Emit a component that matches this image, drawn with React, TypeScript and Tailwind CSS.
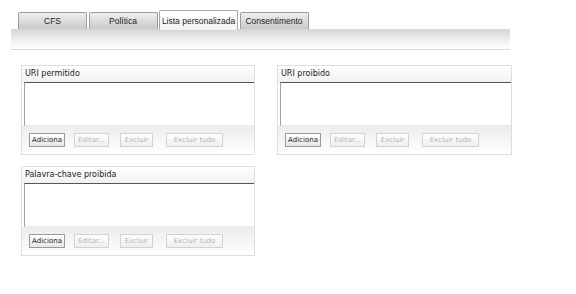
import React from "react";

const tabs = ["CFS", "Política", "Lista personalizada", "Consentimento"];

const ListBox = ({ title }: { title: string }) => (
  <div className="flex h-[90px] flex-col border border-[#dedede] bg-white">
    {/* header */}
    <div className="flex h-[16px] items-center bg-gradient-to-b from-white to-[#f1f1f1] pl-[3px] font-['DejaVu_Sans',sans-serif] text-[8px] text-[#222]">
      {title}
    </div>
    {/* list area */}
    <div className="ml-[2px] h-[44px] border-l border-t border-b border-l-[#a0a0a0] border-t-[#555] border-b-[#ececec] bg-white" />
    {/* buttons */}
    <div className="flex flex-1 items-center bg-gradient-to-b from-[#ececec] to-white pl-[7px] font-['DejaVu_Sans',sans-serif] text-[7px]">
      <button className="h-[14px] w-[36px] border border-[#9a9a9a] bg-gradient-to-b from-white to-[#e6e6e6] text-[#1c1c2e]">
        Adiciona
      </button>
      <button className="ml-[9px] h-[14px] w-[35px] border border-[#d2d2d2] bg-gradient-to-b from-white to-[#eeeeee] text-[#b4b4b4]">
        Editar...
      </button>
      <button className="ml-[11px] h-[14px] w-[33px] border border-[#d2d2d2] bg-gradient-to-b from-white to-[#eeeeee] text-[#b4b4b4]">
        Excluir
      </button>
      <button className="ml-[13px] h-[14px] w-[57px] border border-[#d2d2d2] bg-gradient-to-b from-white to-[#eeeeee] text-[#b4b4b4]">
        Excluir tudo
      </button>
    </div>
  </div>
);

export default function App() {
  return (
    <div className="h-[294px] w-[576px] bg-white pt-[10px]">
      {/* tab strip */}
      <div className="ml-[11px] w-[499px]">
        <div className="ml-[7px] flex items-end gap-[1.5px] font-['Liberation_Sans',Arial,sans-serif] text-[8.5px] text-[#222]">
          {tabs.map((t, i) =>
            i === 2 ? (
              <div
                key={t}
                className="-mb-px flex h-[20px] w-[79px] items-center justify-center rounded-t-[2px] border border-b-0 border-[#a8a8a8] bg-gradient-to-b from-white to-[#f3f3f3] pt-[1px]"
              >
                {t}
              </div>
            ) : (
              <div
                key={t}
                className="flex h-[17px] w-[69px] items-center justify-center rounded-t-[2px] border border-b-0 border-[#9c9c9c] bg-gradient-to-b from-[#efefef] to-[#c9c9c9]"
              >
                {t}
              </div>
            )
          )}
        </div>
        <div className="h-[21px] border-b border-[#dadada] bg-gradient-to-b from-[#d5d5d5] via-[#ececec] to-white" />
      </div>

      {/* lists */}
      <div className="ml-[21px] mt-[15px] grid grid-cols-[234px_235px] gap-x-[22px] gap-y-[11px]">
        <ListBox title="URI permitido" />
        <ListBox title="URI proibido" />
        <ListBox title="Palavra-chave proibida" />
      </div>
    </div>
  );
}
